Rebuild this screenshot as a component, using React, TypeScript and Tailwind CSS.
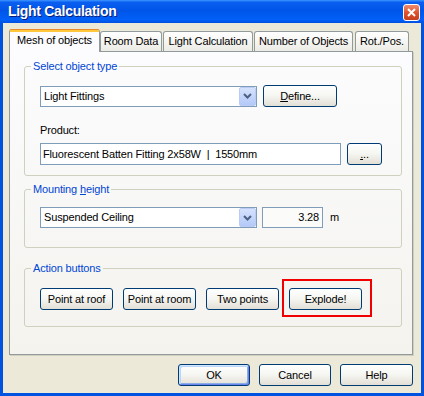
import clsx from "clsx";

function XpButton({
  children,
  className,
  isDefault,
}: {
  children: React.ReactNode;
  className?: string;
  isDefault?: boolean;
}) {
  return (
    <button
      className={clsx(
        "flex h-[22px] items-center justify-center rounded-[3px] border border-[#003C74] bg-linear-to-b from-white via-[#F5F5F1] to-[#E2DFD5] text-[11px] tracking-[-0.15px] text-black",
        isDefault &&
          "shadow-[inset_1px_1px_0_#CEE7FF,inset_-1px_-1px_0_#6982EE,inset_2px_2px_0_#BCD4F6,inset_-2px_-2px_0_#89ADE4]",
        className
      )}
    >
      {children}
    </button>
  );
}

function Combo({ value }: { value: string }) {
  return (
    <div className="flex h-[21px] w-[217px] items-center border border-[#7F9DB9] bg-white">
      <span className="flex-1 pl-[3px] text-[11px] tracking-[-0.15px]">{value}</span>
      <span className="flex h-[19px] w-[17px] items-center justify-center rounded-[2px] border border-[#BACCF5] bg-linear-to-b from-[#D6E2FD] to-[#B4C9F8]">
        <svg width="9" height="6" viewBox="0 0 9 6">
          <path d="M1 1 L4.5 4.5 L8 1" fill="none" stroke="#4D6185" strokeWidth="2" />
        </svg>
      </span>
    </div>
  );
}

function Group({
  legend,
  children,
  className,
}: {
  legend: React.ReactNode;
  children: React.ReactNode;
  className?: string;
}) {
  return (
    <fieldset
      className={clsx(
        "rounded-[3px] border border-[#D0D0BF] pl-[15px]",
        className
      )}
    >
      <legend className="-ml-[9px] px-[2px] text-[11px] leading-[13px] tracking-[-0.15px] text-[#0046D5]">
        {legend}
      </legend>
      {children}
    </fieldset>
  );
}

const tabs = [
  { label: "Room Data", w: "w-[62px]", ml: "ml-0" },
  { label: "Light Calculation", w: "w-[90px]", ml: "ml-[1px]" },
  { label: "Number of Objects", w: "w-[99px]", ml: "ml-[1px]" },
  { label: "Rot./Pos.", w: "w-[54px]", ml: "ml-[2px]" },
];

export default function App() {
  return (
    <div className="flex h-[396px] w-[424px] flex-col bg-[#0053E1] font-['Liberation_Sans',Arial,sans-serif] text-black">
      {/* title bar */}
      <div className="flex h-[23px] items-center justify-between bg-[linear-gradient(to_bottom,#3D95FF_0%,#0A5FF0_10%,#0055E8_45%,#0060F8_85%,#0050E0_100%)] pl-[8px] pr-[4px]">
        <span className="text-[14px] font-bold tracking-[-0.3px] text-white [text-shadow:1px_1px_#0A1C7A]">
          Light Calculation
        </span>
        <span className="mt-[2px] flex h-[17px] w-[17px] items-center justify-center rounded-[3px] border border-white bg-linear-to-b from-[#EE8C6E] via-[#E0542E] to-[#C4401C]">
          <svg width="9" height="9" viewBox="0 0 9 9">
            <path d="M1 1 L8 8 M8 1 L1 8" stroke="white" strokeWidth="2" />
          </svg>
        </span>
      </div>

      {/* body */}
      <div className="mx-[3px] mb-[3px] flex flex-1 flex-col bg-[#ECE9D8] pl-[6px] pr-[8px] pt-[6px]">
        {/* tabs */}
        <div className="flex h-[22px] items-end">
          <div className="relative z-10 -mb-px flex h-[23px] w-[91px] flex-col rounded-t-[3px] border-x border-[#919B9C] bg-[#FCFCFE]">
            <div className="h-[1px] rounded-t-[3px] bg-[#E68B2C]" />
            <div className="h-[2px] bg-[#FFC73C]" />
            <div className="flex flex-1 items-center justify-center pb-[3px] text-[11px] tracking-[-0.15px]">
              Mesh of objects
            </div>
          </div>
          {tabs.map((t) => (
            <div
              key={t.label}
              className={clsx(
                "flex h-[20px] items-center justify-center rounded-t-[3px] border-x border-t border-[#919B9C] bg-linear-to-b from-white to-[#ECEBE5] text-[11px] tracking-[-0.15px]",
                t.w,
                t.ml
              )}
            >
              {t.label}
            </div>
          ))}
        </div>

        {/* tab page */}
        <div className="flex h-[304px] flex-col border border-[#919B9C] bg-linear-to-b from-[#FCFCFE] to-[#F4F3EE] pl-[14px] pr-[10px] pt-[8px] shadow-[1px_1px_0_#D0CEBF]">
          <Group legend="Select object type" className="pb-[10px] pt-[12px]">
            <div className="flex items-center">
              <Combo value="Light Fittings" />
              <XpButton className="ml-[6px] w-[74px]">
                <span>
                  <span className="underline">D</span>efine...
                </span>
              </XpButton>
            </div>
            <div className="mt-[17px] text-[11px] leading-[13px] tracking-[-0.15px]">Product:</div>
            <div className="mt-[6px] flex items-center">
              <div className="flex h-[22px] w-[301px] items-center border border-[#7F9DB9] bg-white pl-[2px] text-[11px] tracking-[-0.15px] whitespace-pre">
                Fluorescent Batten Fitting 2x58W  |  1550mm
              </div>
              <XpButton className="ml-[6px] h-[21px] w-[35px]">
                <span>
                  <span className="underline">.</span>..
                </span>
              </XpButton>
            </div>
          </Group>

          <Group
            legend={
              <span>
                Mounting <span className="underline">h</span>eight
              </span>
            }
            className="mt-[7px] pb-[19px] pt-[11px]"
          >
            <div className="flex items-center">
              <Combo value="Suspended Ceiling" />
              <div className="ml-[5px] flex h-[21px] w-[61px] items-center justify-end border border-[#7F9DB9] bg-[#FBFBF9] pr-[3px] text-[11px] tracking-[-0.15px]">
                3.28
              </div>
              <span className="ml-[7px] text-[11px]">m</span>
            </div>
          </Group>

          <Group legend="Action buttons" className="mt-[14px] pb-[16px] pt-[13px]">
            <div className="flex items-center gap-[10px]">
              <XpButton className="w-[73px]">Point at roof</XpButton>
              <XpButton className="w-[73px]">Point at room</XpButton>
              <XpButton className="w-[73px]">Two points</XpButton>
              <div className="relative">
                <XpButton className="w-[73px]">Explode!</XpButton>
                <span className="pointer-events-none absolute -bottom-[7px] -left-[7px] -right-[10px] -top-[9px] border-2 border-[#F00000]" />
              </div>
            </div>
          </Group>
        </div>

        {/* dialog buttons */}
        <div className="mt-[9px] flex justify-end gap-[9px]">
          <XpButton isDefault className="w-[72px]">OK</XpButton>
          <XpButton className="w-[72px]">Cancel</XpButton>
          <XpButton className="w-[73px]">Help</XpButton>
        </div>
      </div>
    </div>
  );
}
